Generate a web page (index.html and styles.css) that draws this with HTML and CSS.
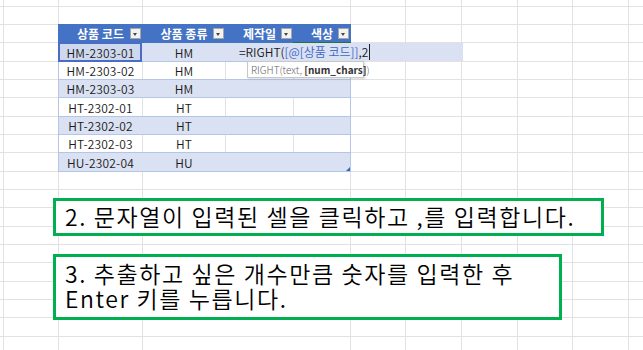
FILE: index.html
```html
<!DOCTYPE html>
<html>
<head>
    <title>RIGHT 함수 입력</title>
    <link rel="stylesheet" href="styles.css">
</head>
<body>
    <div class="sheet">
        <div class="table">
            <div class="row head">
                <div class="cell">상품 코드<span class="dd"></span></div>
                <div class="cell">상품 종류<span class="dd"></span></div>
                <div class="cell">제작일<span class="dd"></span></div>
                <div class="cell">색상<span class="dd"></span></div>
            </div>

            <!-- 수식 입력 중인 행 -->
            <div class="row band tall">
                <div class="cell ref">HM-2303-01</div>
                <div class="cell">HM</div>
                <div class="cell"></div>
                <div class="cell"></div>
                <div class="editor">=RIGHT(<span class="ref-text">[@[상품 코드]]</span>,2<span class="caret"></span></div>
                <div class="active-box"></div>
                <div class="tip">RIGHT(text, <b>[num_chars]</b>)</div>
            </div>
            <div class="row">
                <div class="cell">HM-2303-02</div>
                <div class="cell">HM</div>
                <div class="cell"></div>
                <div class="cell"></div>
            </div>
            <div class="row band">
                <div class="cell">HM-2303-03</div>
                <div class="cell">HM</div>
                <div class="cell"></div>
                <div class="cell"></div>
            </div>
            <div class="row tall">
                <div class="cell">HT-2302-01</div>
                <div class="cell">HT</div>
                <div class="cell"></div>
                <div class="cell"></div>
            </div>
            <div class="row band">
                <div class="cell">HT-2302-02</div>
                <div class="cell">HT</div>
                <div class="cell"></div>
                <div class="cell"></div>
            </div>
            <div class="row">
                <div class="cell">HT-2302-03</div>
                <div class="cell">HT</div>
                <div class="cell"></div>
                <div class="cell"></div>
            </div>
            <div class="row band tall last">
                <div class="cell">HU-2302-04</div>
                <div class="cell">HU</div>
                <div class="cell"></div>
                <div class="cell"></div>
            </div>
        </div>

        <div class="note note-one">2. 문자열이 입력된 셀을 클릭하고 ,를 입력합니다.</div>
        <div class="note note-two">3. 추출하고 싶은 개수만큼 숫자를 입력한 후<br>Enter 키를 누릅니다.</div>
    </div>
</body>
</html>
```

FILE: styles.css
```css
body {
    margin: 0;
    font-family: "Noto Sans CJK KR", "Noto Sans", sans-serif;
}

/* 시트 눈금선 */
.sheet {
    width: 643px;
    height: 350px;
    box-sizing: border-box;
    padding-top: 24px;
    overflow: hidden;
    background-color: #fff;
    background-image:
        linear-gradient(#e2e2e2, #e2e2e2),
        linear-gradient(#e2e2e2, #e2e2e2),
        linear-gradient(#e2e2e2, #e2e2e2),
        linear-gradient(#e2e2e2, #e2e2e2),
        linear-gradient(#e2e2e2, #e2e2e2),
        linear-gradient(#e2e2e2, #e2e2e2),
        linear-gradient(#e2e2e2, #e2e2e2),
        linear-gradient(#e2e2e2, #e2e2e2),
        linear-gradient(#e2e2e2, #e2e2e2),
        repeating-linear-gradient(to bottom,
            #e2e2e2 0 1px, transparent 1px 18px,
            #e2e2e2 18px 19px, transparent 19px 36px,
            #e2e2e2 36px 37px, transparent 37px 55px);
    background-size:
        1px 100%, 1px 100%, 1px 100%, 1px 100%, 1px 100%,
        1px 100%, 1px 100%, 1px 100%, 1px 100%,
        100% 55px;
    background-repeat: no-repeat, no-repeat, no-repeat, no-repeat, no-repeat,
        no-repeat, no-repeat, no-repeat, no-repeat, repeat;
    background-position:
        3px 0, 58px 0, 350px 0, 405px 0, 461px 0,
        517px 0, 572px 0, 628px 0, 142px 0,
        0 6px;
}

/* 표 */
.table {
    width: 293px;
    margin-left: 58px;
    font-size: 12px;
    color: #1a1a1a;
}

.row {
    position: relative;
    display: grid;
    grid-template-columns: 85px 83px 68px 57px;
    height: 18px;
    box-sizing: border-box;
    border-bottom: 1px solid #b4c6e7;
    background-color: #fff;
}

.row.tall {
    height: 19px;
}

.row.band {
    background-color: #d9e1f2;
}

.cell {
    position: relative;
    display: flex;
    align-items: center;
    justify-content: center;
    box-sizing: border-box;
    border-right: 1px solid #e2e2e2;
    white-space: nowrap;
    font-weight: 350;
    letter-spacing: 0.2px;
}

.row.band .cell {
    border-right-color: #d9e1f2;
}

.cell:first-child {
    border-left: 1px solid #b4c6e7;
}

.cell:nth-child(4),
.row.band .cell:nth-child(4) {
    border-right-color: #b4c6e7;
}

.row.head {
    height: 19px;
    border-bottom: none;
    background-color: #4472c4;
    color: #fff;
}

.row.head .cell {
    font-weight: bold;
    letter-spacing: 0;
}

.row.head .cell,
.row.head .cell:first-child,
.row.head .cell:nth-child(4) {
    border-color: #4472c4;
}

.dd {
    position: absolute;
    right: 1px;
    top: 4px;
    width: 11px;
    height: 11px;
    box-sizing: border-box;
    background-color: #f3f3f3;
    border: 1px solid #a6a6a6;
}

.dd::after {
    content: "";
    position: absolute;
    left: 2px;
    top: 4px;
    border-left: 2.5px solid transparent;
    border-right: 2.5px solid transparent;
    border-top: 3px solid #444;
}

/* 참조 셀 표시 */
.ref {
    background-color: #cfd9ee;
}

.ref::after {
    content: "";
    position: absolute;
    top: -1px;
    left: -1px;
    right: 0;
    bottom: -1px;
    border: 2px solid #4a6cc6;
}

/* 셀 편집기 */
.editor {
    position: absolute;
    left: 178px;
    top: 0;
    width: 227px;
    height: 18px;
    padding-left: 3px;
    box-sizing: border-box;
    background-color: #d9e1f2;
    font-size: 12px;
    font-weight: 350;
    line-height: 18px;
    white-space: nowrap;
    z-index: 2;
}

.ref-text {
    color: #3e64c8;
}

.caret {
    display: inline-block;
    width: 1px;
    height: 16px;
    margin-left: 1px;
    vertical-align: -3px;
    background-color: #222;
}

.active-box {
    position: absolute;
    left: 235px;
    top: -1px;
    width: 58px;
    height: 20px;
    box-sizing: border-box;
    border-top: 1px solid #217346;
    border-bottom: 1px solid #217346;
    z-index: 3;
}

.tip {
    position: absolute;
    left: 189px;
    top: 18px;
    width: 117px;
    height: 17px;
    box-sizing: border-box;
    padding-left: 3px;
    background-color: #fff;
    border: 1px solid #c8c8c8;
    box-shadow: 1px 1px 2px rgba(0, 0, 0, 0.15);
    color: #666;
    font-size: 10px;
    font-weight: 300;
    line-height: 15px;
    white-space: nowrap;
    z-index: 4;
}

.tip b {
    color: #333;
    font-weight: bold;
}

.row.last .cell:nth-child(4)::after {
    content: "";
    position: absolute;
    right: 0;
    bottom: 0;
    border-left: 4px solid transparent;
    border-bottom: 4px solid #3f63c0;
}

/* 설명 상자 */
.note {
    margin-left: 53px;
    box-sizing: border-box;
    border: 3px solid #00b050;
    background-color: #fff;
    color: #000;
    font-size: 23px;
    font-weight: 350;
    letter-spacing: 1.6px;
    white-space: nowrap;
}

.note-one {
    width: 551px;
    height: 38px;
    margin-top: 26px;
    padding-left: 9px;
    line-height: 31px;
}

.note-two {
    width: 509px;
    height: 66px;
    margin-top: 18px;
    padding: 4px 9px 0;
    line-height: 25px;
}
```
